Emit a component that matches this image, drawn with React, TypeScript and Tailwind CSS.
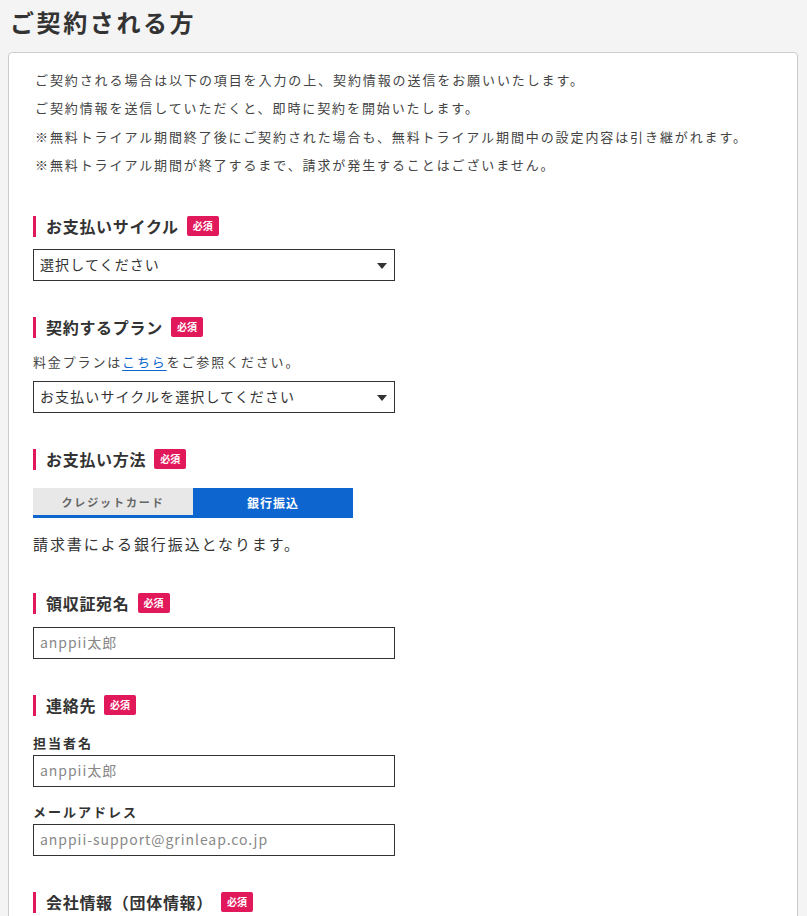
import React from "react";

const font = { fontFamily: '"Noto Sans CJK JP", "Noto Sans", sans-serif' };

function Badge() {
  return (
    <span className="ml-[8px] inline-flex h-[20px] w-[32px] items-center justify-center rounded-[2px] bg-[#e1195b] text-[10px] font-bold leading-none text-white">
      必須
    </span>
  );
}

function Heading({ children }: { children: React.ReactNode }) {
  return (
    <div className="flex h-[21px] items-center">
      <span className="h-[21px] w-[3px] bg-[#e1195b]" />
      <span className="ml-[10px] text-[16px] font-bold leading-[21px] tracking-[0.7px] text-[#333]">
        {children}
      </span>
      <Badge />
    </div>
  );
}

function Select({ text }: { text: string }) {
  return (
    <div className="relative flex h-[32px] w-[362px] items-center border border-[#333] bg-white pl-[6px]">
      <span className="text-[14px] tracking-[1.1px] text-[#333]">{text}</span>
      <svg className="absolute right-[7px] top-[13px]" width="10" height="6" viewBox="0 0 10 6">
        <polygon points="0,0 10,0 5,6" fill="#333" />
      </svg>
    </div>
  );
}

function Input({ placeholder }: { placeholder: string }) {
  return (
    <div className="flex h-[32px] w-[362px] items-center border border-[#333] bg-white pl-[6px]">
      <span className="text-[14px] tracking-[0.95px] text-[#888]">{placeholder}</span>
    </div>
  );
}

export default function App() {
  return (
    <div className="min-h-[916px] bg-[#f4f4f4] pl-2 pr-[9px]" style={font}>
      <h1 className="pl-[2px] pt-1 text-[24px] font-bold leading-[36px] tracking-[2.6px] text-[#333]">
        ご契約される方
      </h1>
      <div className="mt-3 min-h-[900px] rounded-[4px] border border-[#cccccc] bg-white pl-6 pt-[13px]">
        <div className="pl-[2px] text-[13px] leading-[28.4px] tracking-[1.9px] text-[#444]">
          <p>ご契約される場合は以下の項目を入力の上、契約情報の送信をお願いいたします。</p>
          <p>ご契約情報を送信していただくと、即時に契約を開始いたします。</p>
          <p>※無料トライアル期間終了後にご契約された場合も、無料トライアル期間中の設定内容は引き継がれます。</p>
          <p>※無料トライアル期間が終了するまで、請求が発生することはございません。</p>
        </div>

        <div className="mt-[36px]">
          <Heading>お支払いサイクル</Heading>
          <div className="mt-[12px]">
            <Select text="選択してください" />
          </div>
        </div>

        <div className="mt-[36px]">
          <Heading>契約するプラン</Heading>
          <p className="mt-[14px] text-[13px] leading-[20px] tracking-[1.85px] text-[#444]">
            料金プランは
            <a className="text-[#0d66d0] underline underline-offset-[3px]" href="#">
              こちら
            </a>
            をご参照ください。
          </p>
          <div className="mt-[9px]">
            <Select text="お支払いサイクルを選択してください" />
          </div>
        </div>

        <div className="mt-[36px]">
          <Heading>お支払い方法</Heading>
          <div className="mt-[18px] flex w-[320px]">
            <div className="flex h-[30px] w-[160px] items-center justify-center border-b-[3px] border-[#0d66d0] bg-[#e8e8e8] pt-[2px] text-[11px] font-bold tracking-[1.9px] text-[#666]">
              クレジットカード
            </div>
            <div className="flex h-[30px] w-[160px] items-center justify-center bg-[#0d66d0] text-[12px] font-bold tracking-[1px] text-white">
              銀行振込
            </div>
          </div>
          <p className="mt-[14px] text-[15px] leading-[24px] tracking-[1.9px] text-[#333]">
            請求書による銀行振込となります。
          </p>
        </div>

        <div className="mt-[37px]">
          <Heading>領収証宛名</Heading>
          <div className="mt-[13px]">
            <Input placeholder="anppii太郎" />
          </div>
        </div>

        <div className="mt-[36px]">
          <Heading>連絡先</Heading>
          <p className="mt-[17px] text-[13px] font-bold leading-[20px] tracking-[2px] text-[#333]">
            担当者名
          </p>
          <div className="mt-[2px]">
            <Input placeholder="anppii太郎" />
          </div>
          <p className="mt-[15px] text-[13px] font-bold leading-[20px] tracking-[2px] text-[#333]">
            メールアドレス
          </p>
          <div className="mt-[2px]">
            <Input placeholder="anppii-support@grinleap.co.jp" />
          </div>
        </div>

        <div className="mt-[36px]">
          <Heading>会社情報（団体情報）</Heading>
        </div>
      </div>
    </div>
  );
}
